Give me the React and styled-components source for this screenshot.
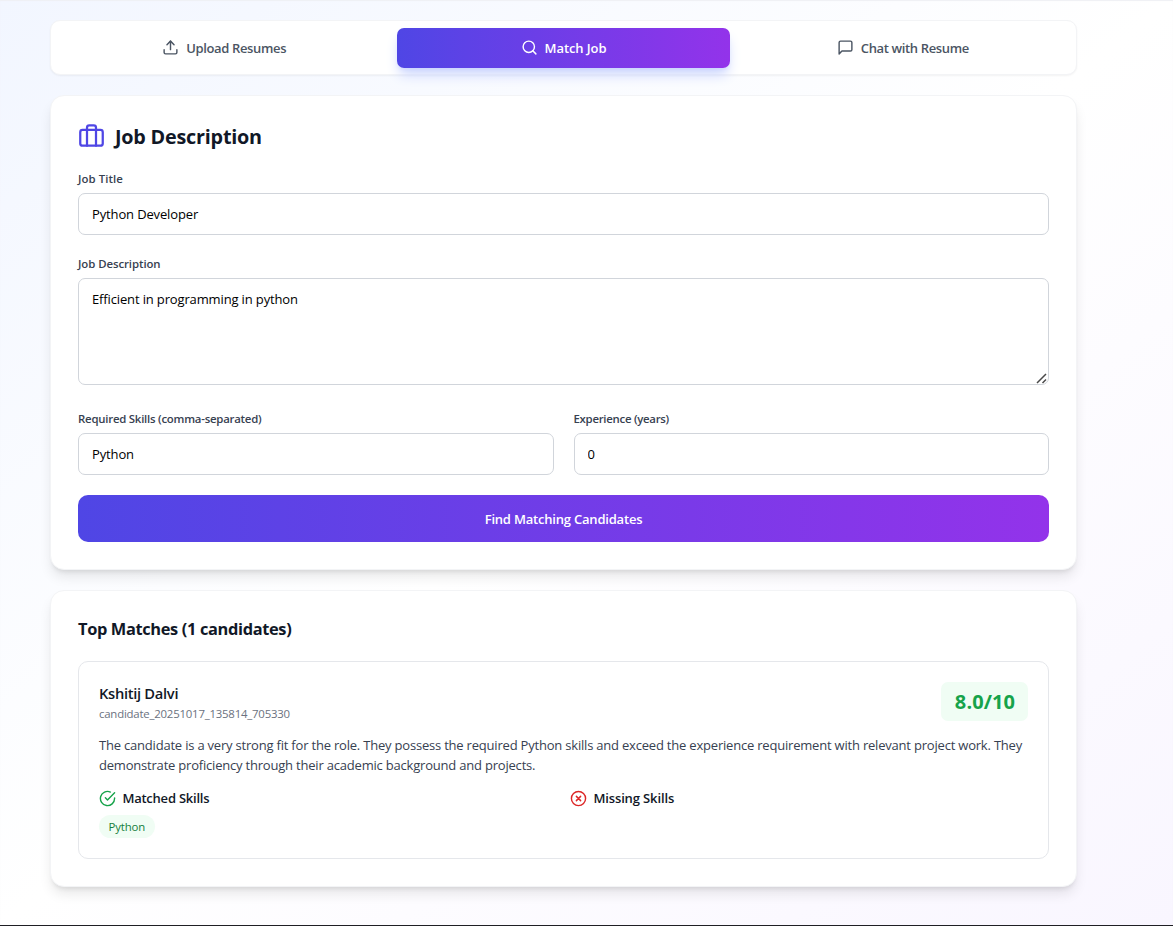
import React from 'react';
import styled, { createGlobalStyle, css } from 'styled-components';

const GlobalStyle = createGlobalStyle`
  *, *::before, *::after { box-sizing: border-box; }
  body {
    margin: 0;
    font-family: "Segoe UI", "Open Sans", "Noto Sans", sans-serif;
    color: #111827;
  }
  h1, h2, h3, h4, p { margin: 0; }
  input, textarea, button { font-family: inherit; }
`;

const Page = styled.div`
  height: 926px;
  overflow: hidden;
  padding: 20px 0 0 50px;
  border-bottom: 1px solid #1f1f24;
  background: linear-gradient(to bottom right, #f2f6ff 0%, #ffffff 50%, #f9f6ff 100%);
  box-shadow: inset 0 1px 1px #eff0f4;
`;

const Column = styled.main`
  width: 1027px;
  display: flex;
  flex-direction: column;
  gap: 20px;
`;

const Tabs = styled.nav`
  display: grid;
  grid-template-columns: repeat(3, 1fr);
  gap: 7px;
  height: 55px;
  padding: 7px 7px 6px;
  background: #fff;
  border: 1px solid #f3f4f6;
  border-radius: 10px;
  box-shadow: 0 1px 2px rgba(0, 0, 0, 0.05);
`;

const Tab = styled.button`
  display: flex;
  align-items: center;
  justify-content: center;
  gap: 7px;
  padding: 0;
  border: 0;
  border-radius: 7px;
  background: transparent;
  color: #4b5563;
  font-size: 13px;
  font-weight: 600;
  letter-spacing: ${(p) => p.$tracking}px;
  ${(p) =>
    p.$active &&
    css`
      color: #fff;
      background: linear-gradient(to right, #4f46e5, #9333ea);
      box-shadow: 0 8.5px 12.75px -2.5px #c7d2fe, 0 3.4px 5.1px -3.4px #c7d2fe;
    `}
  svg { margin-top: -2px; }
`;

const Card = styled.section`
  padding: 27px;
  background: #fff;
  border: 1px solid #f3f4f6;
  border-radius: 14px;
  box-shadow: 0 8.5px 12.75px -2.5px rgba(0, 0, 0, 0.1), 0 3.4px 5.1px -3.4px rgba(0, 0, 0, 0.1);
`;

const FormHeader = styled.header`
  display: flex;
  align-items: center;
  gap: 10px;
  height: 27px;
  margin-bottom: 20px;
  svg { color: #4f46e5; margin-top: -2px; }
`;

const FormTitle = styled.h2`
  font-size: 19.8px;
  line-height: 27px;
  font-weight: 700;
  letter-spacing: -0.22px;
`;

const Form = styled.div`
  display: flex;
  flex-direction: column;
  gap: 20px;
`;

const FieldRow = styled.div`
  display: grid;
  grid-template-columns: 1fr 1fr;
  gap: 20px;
`;

const Field = styled.div`
  display: flex;
  flex-direction: column;
  padding-bottom: ${(p) => p.$after || 0}px;
`;

const Label = styled.label`
  height: 17px;
  margin-bottom: 6px;
  color: #374151;
  font-size: 11.4px;
  line-height: 17px;
  font-weight: 600;
  letter-spacing: ${(p) => p.$tracking}px;
`;

const control = css`
  width: 100%;
  padding: 0 13px;
  border: 1px solid #d1d5db;
  border-radius: 7px;
  background: #fff;
  color: #000;
  font-size: 13px;
  letter-spacing: -0.14px;
  outline: none;
`;

const Input = styled.input`
  ${control}
  height: 42px;
`;

const TextArea = styled.textarea`
  ${control}
  display: block;
  height: 107px;
  padding-top: 10px;
  line-height: 20.4px;
  resize: none;
`;

const TextAreaFrame = styled.div`
  position: relative;
`;

const Grip = styled.svg`
  position: absolute;
  right: 2px;
  bottom: 1px;
  color: #4a4a4a;
`;

const Submit = styled.button`
  height: 47px;
  padding: 0;
  border: 0;
  border-radius: 10px;
  background: linear-gradient(to right, #4f46e5, #9333ea);
  color: #fff;
  font-size: 13px;
  font-weight: 600;
  letter-spacing: -0.2px;
`;

const MatchesTitle = styled.h3`
  height: 23px;
  margin-bottom: 20px;
  font-size: 16.4px;
  line-height: 22px;
  font-weight: 700;
  letter-spacing: -0.35px;
`;

const Candidate = styled.article`
  height: 198px;
  padding: 20px;
  border: 1px solid #e5e7eb;
  border-radius: 10px;
`;

const CandidateTop = styled.div`
  display: flex;
  justify-content: space-between;
  align-items: flex-start;
  height: 53px;
`;

const Name = styled.h4`
  font-size: 14.7px;
  line-height: 23px;
  font-weight: 600;
  letter-spacing: -0.3px;
`;

const CandidateId = styled.p`
  color: #6b7280;
  font-size: 11.4px;
  line-height: 17px;
  letter-spacing: -0.21px;
`;

const Score = styled.div`
  width: 87px;
  height: 39px;
  padding-left: 1px;
  border-radius: 7px;
  background: #f0fdf4;
  color: #16a34a;
  font-size: 20px;
  line-height: 40px;
  font-weight: 700;
  letter-spacing: 0.1px;
  text-align: center;
`;

const Summary = styled.p`
  height: 41px;
  margin-bottom: 12px;
  color: #374151;
  font-size: 13px;
  line-height: 20.4px;
  letter-spacing: -0.202px;
`;

const Skills = styled.div`
  display: grid;
  grid-template-columns: 1fr 1fr;
  gap: 13px;
`;

const SkillsTitle = styled.div`
  display: flex;
  align-items: center;
  gap: 6.4px;
  height: 20px;
  margin-bottom: 7px;
  font-size: 13px;
  font-weight: 600;
  letter-spacing: ${(p) => p.$tracking}px;
  svg { color: ${(p) => p.$icon}; }
`;

const Pill = styled.span`
  display: inline-block;
  height: 23px;
  padding: 0 9.6px;
  border-radius: 12px;
  background: #f0fdf4;
  color: #15803d;
  font-size: 11.4px;
  line-height: 23px;
  letter-spacing: -0.15px;
  vertical-align: top;
`;

const Icon = ({ size = 17, children }) => (
  <svg
    width={size}
    height={size}
    viewBox="0 0 24 24"
    fill="none"
    stroke="currentColor"
    strokeWidth="2"
    strokeLinecap="round"
    strokeLinejoin="round"
  >
    {children}
  </svg>
);

const UploadIcon = () => (
  <Icon>
    <path d="M21 15v4a2 2 0 0 1-2 2H5a2 2 0 0 1-2-2v-4" />
    <polyline points="17 8 12 3 7 8" />
    <line x1="12" y1="3" x2="12" y2="15" />
  </Icon>
);

const SearchIcon = () => (
  <Icon>
    <circle cx="11" cy="11" r="8" />
    <line x1="21" y1="21" x2="16.65" y2="16.65" />
  </Icon>
);

const ChatIcon = () => (
  <Icon>
    <path d="M21 15a2 2 0 0 1-2 2H7l-4 4V5a2 2 0 0 1 2-2h14a2 2 0 0 1 2 2z" />
  </Icon>
);

const BriefcaseIcon = () => (
  <Icon size={27}>
    <rect x="2" y="7" width="20" height="14" rx="2" ry="2" />
    <path d="M16 21V5a2 2 0 0 0-2-2h-4a2 2 0 0 0-2 2v16" />
  </Icon>
);

const CheckIcon = () => (
  <Icon>
    <path d="M22 11.08V12a10 10 0 1 1-5.93-9.14" />
    <path d="m9 11 3 3L22 4" />
  </Icon>
);

const CrossIcon = () => (
  <Icon>
    <circle cx="12" cy="12" r="10" />
    <path d="m15 9-6 6M9 9l6 6" />
  </Icon>
);

const ResizeGrip = () => (
  <Grip width="11" height="11" viewBox="0 0 11 11" fill="none" stroke="currentColor" strokeWidth="1.5">
    <path d="M1 10 10 1M6.5 10 10 6.5" />
  </Grip>
);

export default function App() {
  return (
    <>
      <GlobalStyle />
      <Page>
        <Column>
          <Tabs>
            <Tab $tracking={-0.35}><UploadIcon />Upload Resumes</Tab>
            <Tab $active $tracking={-0.1}><SearchIcon />Match Job</Tab>
            <Tab $tracking={-0.36}><ChatIcon />Chat with Resume</Tab>
          </Tabs>

          <Card>
            <FormHeader>
              <BriefcaseIcon />
              <FormTitle>Job Description</FormTitle>
            </FormHeader>
            <Form>
              <Field>
                <Label $tracking={0.08}>Job Title</Label>
                <Input defaultValue="Python Developer" />
              </Field>
              <Field $after={5}>
                <Label $tracking={-0.07}>Job Description</Label>
                <TextAreaFrame>
                  <TextArea defaultValue="Efficient in programming in python" />
                  <ResizeGrip />
                </TextAreaFrame>
              </Field>
              <FieldRow>
                <Field>
                  <Label $tracking={-0.23}>Required Skills (comma-separated)</Label>
                  <Input defaultValue="Python" />
                </Field>
                <Field>
                  <Label $tracking={-0.27}>Experience (years)</Label>
                  <Input defaultValue="0" />
                </Field>
              </FieldRow>
              <Submit>Find Matching Candidates</Submit>
            </Form>
          </Card>

          <Card>
            <MatchesTitle>Top Matches (1 candidates)</MatchesTitle>
            <Candidate>
              <CandidateTop>
                <div>
                  <Name>Kshitij Dalvi</Name>
                  <CandidateId>candidate_20251017_135814_705330</CandidateId>
                </div>
                <Score>8.0/10</Score>
              </CandidateTop>
              <Summary>
                The candidate is a very strong fit for the role. They possess the required Python skills and
                exceed the experience requirement with relevant project work. They demonstrate proficiency
                through their academic background and projects.
              </Summary>
              <Skills>
                <div>
                  <SkillsTitle $icon="#16a34a" $tracking={-0.23}><CheckIcon />Matched Skills</SkillsTitle>
                  <Pill>Python</Pill>
                </div>
                <div>
                  <SkillsTitle $icon="#dc2626" $tracking={-0.13}><CrossIcon />Missing Skills</SkillsTitle>
                </div>
              </Skills>
            </Candidate>
          </Card>
        </Column>
      </Page>
    </>
  );
}
